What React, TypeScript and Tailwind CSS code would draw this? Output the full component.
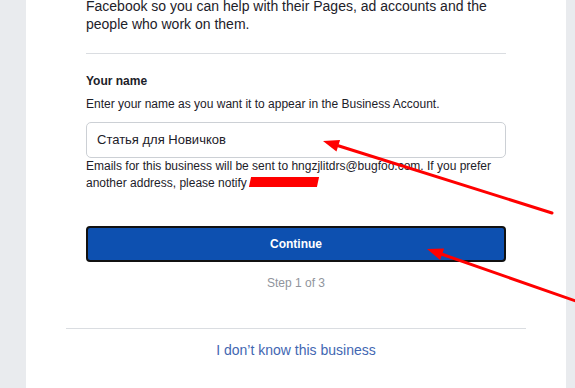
const Arrow = ({ x1, y1, x2, y2 }: { x1: number; y1: number; x2: number; y2: number }) => {
  // arrow pointing from (x1,y1) to tip (x2,y2)
  const a = Math.atan2(y2 - y1, x2 - x1);
  const len = 16;
  const w = 6;
  const bx = x2 - len * Math.cos(a);
  const by = y2 - len * Math.sin(a);
  const p1 = `${bx + w * Math.sin(a)},${by - w * Math.cos(a)}`;
  const p2 = `${bx - w * Math.sin(a)},${by + w * Math.cos(a)}`;
  return (
    <g>
      <line x1={x1} y1={y1} x2={bx} y2={by} stroke="#ff0000" strokeWidth={3} strokeLinecap="round" />
      <polygon points={`${x2},${y2} ${p1} ${p2}`} fill="#ff0000" />
    </g>
  );
};

const App = () => {
  return (
    <div
      className="relative w-[575px] h-[388px] overflow-hidden bg-[#e9ebee] flex"
      style={{ fontFamily: '"Liberation Sans", Arial, sans-serif' }}
    >
      <div className="ml-[26px] w-[540px] h-full bg-white px-10 flex flex-col">
        <div className="px-5">
          <p className="-mt-[3px] text-[14px] leading-[18px] text-[#1d2129]">
            Facebook so you can help with their Pages, ad accounts and the
            <br />
            people who work on them.
          </p>
          <div className="mt-[20px] h-px bg-[#dadde1]" />
          <h3 className="mt-[19px] text-[12px] leading-[16px] font-bold text-[#1d2129]">Your name</h3>
          <p className="mt-[7px] text-[12px] leading-[16px] text-[#1d2129]">
            Enter your name as you want it to appear in the Business Account.
          </p>
          <div className="mt-[10px] h-[36px] border border-[#ccd0d5] rounded-[5px] flex items-center px-[10px] text-[13px] text-[#1d2129]">
            Статья для Новичков
          </div>
          <p className="text-[12px] leading-[17px] text-[#1d2129]">
            Emails for this business will be sent to hngzjlitdrs@bugfoo.com. If you prefer
            <br />
            another address, please notify{" "}
            <span className="inline-block align-[0px] w-[68px] h-[10px] bg-[#ff0000] -skew-x-12" />
          </p>
          <button className="mt-[34px] w-full h-[36px] rounded-[4px] border-2 border-[#111] bg-[#0d50b0] text-white text-[12px] font-bold">
            Continue
          </button>
          <p className="mt-[13px] text-center text-[12px] leading-[16px] text-[#90949c]">Step 1 of 3</p>
        </div>
        <div className="mt-[37px] h-px bg-[#dadde1]" />
        <div className="mt-[12px] text-center text-[14px] leading-[18px] text-[#4267b2]">I don’t know this business</div>
      </div>
      <svg className="absolute inset-0 pointer-events-none" width={575} height={388}>
        <Arrow x1={552} y1={213} x2={323} y2={141} />
        <Arrow x1={590} y1={306} x2={427} y2={249} />
      </svg>
    </div>
  );
};

export default App;
